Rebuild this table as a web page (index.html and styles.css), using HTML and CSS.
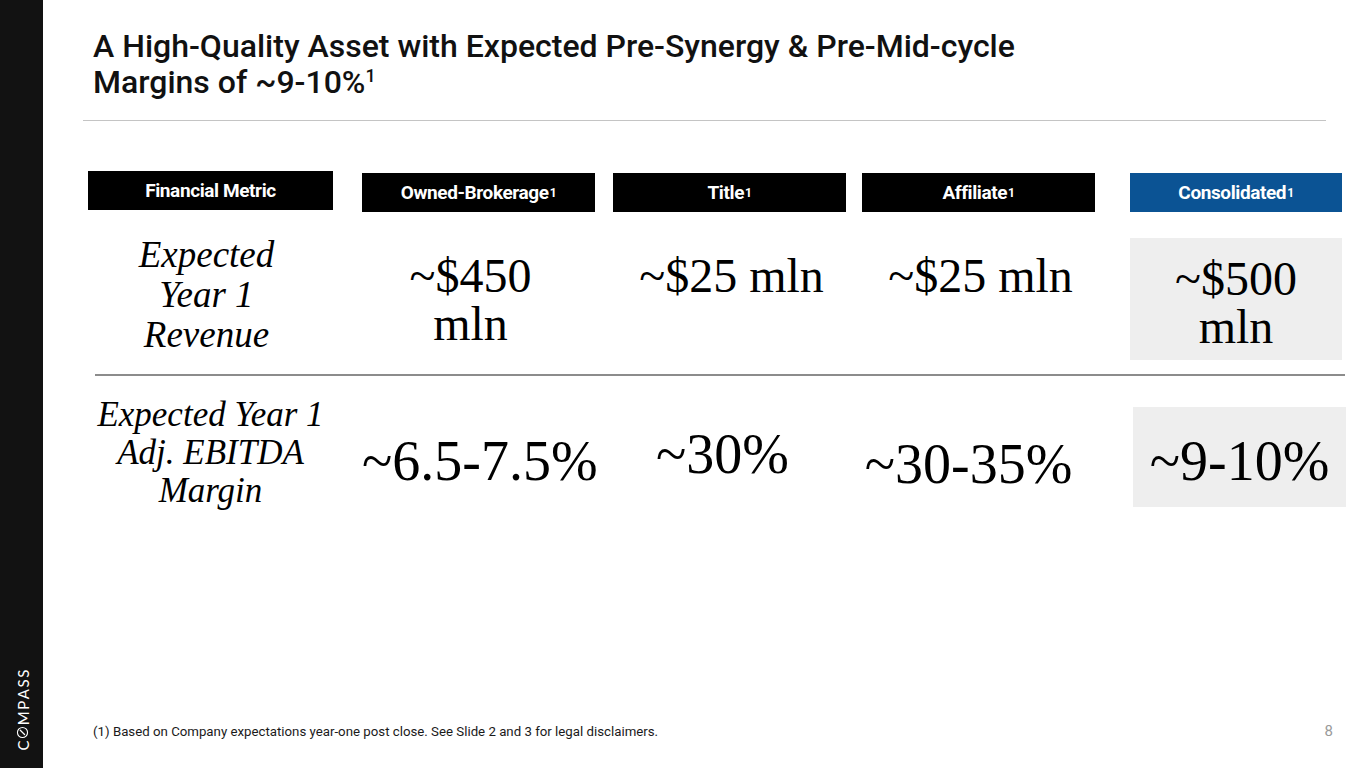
FILE: index.html
```html
<!DOCTYPE html>
<html lang="en">
<head>
<meta charset="utf-8">
<title>A High-Quality Asset</title>
<link rel="stylesheet" href="styles.css">
</head>
<body>
<div class="page">
  <aside class="sidebar">
    <div class="logo">
      <div class="logo-text"><span>C</span><svg class="logo-o" viewBox="0 0 14 14" aria-hidden="true"><circle cx="7" cy="7" r="5.9" fill="none" stroke="#fff" stroke-width="1.3"/><path d="M4.6 9.4 L9.6 4.4" stroke="#fff" stroke-width="1.5" stroke-linecap="round"/></svg><span>M</span><span>P</span><span>A</span><span>S</span><span>S</span></div>
    </div>
  </aside>
  <main class="slide">
    <h1 class="title">A High-Quality Asset with Expected Pre-Synergy &amp; Pre-Mid-cycle<br>Margins of ~9-10%<sup>1</sup></h1>
    <div class="rule"></div>
    <div class="table">
      <div class="th th-metric">Financial Metric</div>
      <div class="th">Owned-Brokerage<sup>1</sup></div>
      <div class="th">Title<sup>1</sup></div>
      <div class="th">Affiliate<sup>1</sup></div>
      <div class="th th-consolidated">Consolidated<sup>1</sup></div>

      <div class="label label-r1">Expected<br>Year 1<br>Revenue</div>
      <div class="val r1 shift-l">~$450<br>mln</div>
      <div class="val r1 shift-r">~$25 mln</div>
      <div class="val r1 shift-r">~$25 mln</div>
      <div class="val r1 boxed box-r1">~$500<br>mln</div>

      <div class="divider"></div>

      <div class="label label-r2">Expected Year 1<br>Adj. EBITDA<br>Margin</div>
      <div class="val r2 r2-a">~6.5-7.5%</div>
      <div class="val r2 r2-b">~30%</div>
      <div class="val r2 r2-c">~30-35%</div>
      <div class="val r2 boxed box-r2">~9-10%</div>
    </div>
    <footer class="footer">
      <p class="footnote">(1) Based on Company expectations year-one post close. See Slide 2 and 3 for legal disclaimers.</p>
      <span class="page-num">8</span>
    </footer>
  </main>
</div>
</body>
</html>
```

FILE: styles.css
```css
* { box-sizing: border-box; }

html, body {
  margin: 0;
  padding: 0;
  background: #ffffff;
}

.page {
  display: flex;
  width: 1365px;
  height: 768px;
  overflow: hidden;
}

.sidebar {
  width: 43px;
  flex: 0 0 43px;
  background: #121212;
  display: flex;
  flex-direction: column;
  justify-content: flex-end;
  padding-bottom: 18px;
}

.logo {
  height: 81px;
  display: flex;
  align-items: center;
  justify-content: center;
}

.logo-text {
  flex: 0 0 auto;
  width: 81px;
  height: 14px;
  display: flex;
  align-items: center;
  justify-content: space-between;
  transform: rotate(-90deg);
  color: #ffffff;
  font-family: "Lato", "Open Sans", sans-serif;
  font-size: 15px;
  line-height: 14px;
  margin-left: 1px;
}

.logo-o {
  width: 12px;
  height: 12px;
  display: block;
}

.slide {
  flex: 1;
  display: flex;
  flex-direction: column;
  color: #000;
}

.title {
  margin: 0;
  padding: 28px 0 0 50px;
  font-family: "Roboto", "Liberation Sans", sans-serif;
  font-weight: 500;
  font-size: 32px;
  line-height: 36px;
  color: #111111;
}

.title sup {
  font-size: 18px;
  line-height: 0;
  vertical-align: 11px;
}

.rule {
  margin: 20px 0 0 40px;
  width: 1243px;
  height: 1px;
  background: #c4c4c4;
}

.table {
  margin: 50px 0 0 45px;
  display: grid;
  grid-template-columns: 274px 251px 249px 268px 216px;
  align-items: start;
}

.th {
  margin-top: 2px;
  width: 233px;
  height: 39px;
  background: #000000;
  color: #ffffff;
  display: flex;
  align-items: center;
  justify-content: center;
  font-family: "Roboto", "Liberation Sans", sans-serif;
  font-weight: 700;
  font-size: 19px;
  letter-spacing: -0.4px;
}

.th sup {
  font-size: 12px;
  line-height: 0;
  vertical-align: 7px;
  margin-left: 1px;
}

.th-metric {
  margin-top: 0;
  width: 245px;
}

.th-consolidated {
  width: 212px;
  background: #0b5394;
}

.label {
  width: 245px;
  text-align: center;
  font-family: "Liberation Serif", "DejaVu Serif", serif;
  font-style: italic;
  font-size: 35px;
}

.label-r1 {
  margin-top: 23px;
  line-height: 40px;
  padding-right: 8px;
  font-size: 37px;
}

.label-r2 {
  margin-top: 20px;
  line-height: 38px;
}

.val {
  width: 233px;
  text-align: center;
  font-family: "Liberation Serif", "DejaVu Serif", serif;
  font-weight: 400;
}

.r1 {
  margin-top: 23px;
  padding-top: 17px;
  font-size: 48px;
  line-height: 48px;
}

.shift-l { padding-right: 16px; }
.shift-r { padding-left: 4px; }

.boxed {
  width: 212px;
  background: #eeeeee;
}

.box-r1 {
  margin-top: 26px;
  height: 122px;
  padding-top: 17px;
}

.divider {
  grid-column: 1 / -1;
  margin: 14px 1px 0 7px;
  height: 2px;
  background: #8c8c8c;
}

.r2 {
  font-size: 56px;
  line-height: 56px;
  white-space: nowrap;
}

.r2-a { margin-top: 57px; padding-right: 16px; }
.r2-b { margin-top: 50px; padding-right: 14px; }
.r2-c { margin-top: 60px; padding-right: 20px; }

.box-r2 {
  margin-top: 31px;
  margin-left: 3px;
  width: 213px;
  height: 100px;
  padding-top: 26px;
}

.footer {
  margin-top: auto;
  display: flex;
  justify-content: space-between;
  align-items: baseline;
  padding: 0 32px 28px 50px;
  font-family: "Roboto", "Liberation Sans", sans-serif;
}

.footnote {
  margin: 0;
  font-size: 13.25px;
  line-height: 16px;
  color: #1a1a1a;
}

.page-num {
  font-size: 15px;
  line-height: 16px;
  color: #9a9a9a;
}
```
